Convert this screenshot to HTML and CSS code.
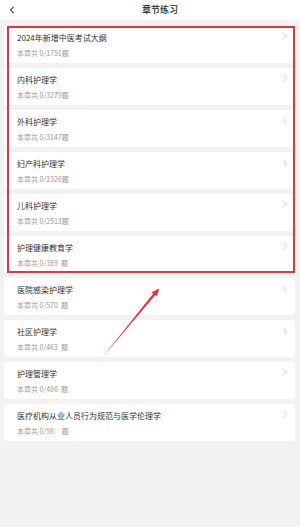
FILE: index.html
```html
<!DOCTYPE html>
<html lang="zh">
<head>
<meta charset="utf-8">
<link rel="stylesheet" href="styles.css">
</head>
<body>
<header class="header">
  <svg class="back" width="6" height="8" viewBox="0 0 6 8"><path d="M4.5 0.8 L1.5 4 L4.5 7.2" fill="none" stroke="#444" stroke-width="1.1"/></svg>
  <div class="title">章节练习</div>
</header>
<main class="list">
  <div class="card"><div class="name">2024年新增中医考试大纲</div><div class="sub">本章共 0/1751题</div><svg class="chev" width="4" height="7" viewBox="0 0 4 7"><path d="M0.5 0.5 L3.3 3.5 L0.5 6.5" fill="none" stroke="#c8c8c8" stroke-width="0.8"/></svg></div>
  <div class="card"><div class="name">内科护理学</div><div class="sub">本章共 0/3279题</div><svg class="chev" width="4" height="7" viewBox="0 0 4 7"><path d="M0.5 0.5 L3.3 3.5 L0.5 6.5" fill="none" stroke="#c8c8c8" stroke-width="0.8"/></svg></div>
  <div class="card"><div class="name">外科护理学</div><div class="sub">本章共 0/3147题</div><svg class="chev" width="4" height="7" viewBox="0 0 4 7"><path d="M0.5 0.5 L3.3 3.5 L0.5 6.5" fill="none" stroke="#c8c8c8" stroke-width="0.8"/></svg></div>
  <div class="card"><div class="name">妇产科护理学</div><div class="sub">本章共 0/2326题</div><svg class="chev" width="4" height="7" viewBox="0 0 4 7"><path d="M0.5 0.5 L3.3 3.5 L0.5 6.5" fill="none" stroke="#c8c8c8" stroke-width="0.8"/></svg></div>
  <div class="card"><div class="name">儿科护理学</div><div class="sub">本章共 0/2513题</div><svg class="chev" width="4" height="7" viewBox="0 0 4 7"><path d="M0.5 0.5 L3.3 3.5 L0.5 6.5" fill="none" stroke="#c8c8c8" stroke-width="0.8"/></svg></div>
  <div class="card"><div class="name">护理健康教育学</div><div class="sub">本章共 0/359&nbsp; 题</div><svg class="chev" width="4" height="7" viewBox="0 0 4 7"><path d="M0.5 0.5 L3.3 3.5 L0.5 6.5" fill="none" stroke="#c8c8c8" stroke-width="0.8"/></svg></div>
  <div class="card"><div class="name">医院感染护理学</div><div class="sub">本章共 0/570&nbsp; 题</div><svg class="chev" width="4" height="7" viewBox="0 0 4 7"><path d="M0.5 0.5 L3.3 3.5 L0.5 6.5" fill="none" stroke="#c8c8c8" stroke-width="0.8"/></svg></div>
  <div class="card"><div class="name">社区护理学</div><div class="sub">本章共 0/463&nbsp; 题</div><svg class="chev" width="4" height="7" viewBox="0 0 4 7"><path d="M0.5 0.5 L3.3 3.5 L0.5 6.5" fill="none" stroke="#c8c8c8" stroke-width="0.8"/></svg></div>
  <div class="card"><div class="name">护理管理学</div><div class="sub">本章共 0/486&nbsp; 题</div><svg class="chev" width="4" height="7" viewBox="0 0 4 7"><path d="M0.5 0.5 L3.3 3.5 L0.5 6.5" fill="none" stroke="#c8c8c8" stroke-width="0.8"/></svg></div>
  <div class="card"><div class="name">医疗机构从业人员行为规范与医学伦理学</div><div class="sub">本章共 0/98&nbsp;&nbsp;&nbsp;&nbsp; 题</div><svg class="chev" width="4" height="7" viewBox="0 0 4 7"><path d="M0.5 0.5 L3.3 3.5 L0.5 6.5" fill="none" stroke="#c8c8c8" stroke-width="0.8"/></svg></div>
</main>
<div class="highlight"></div>
<svg class="arrow" width="300" height="527" viewBox="0 0 300 527">
  <path d="M101.5 358.5 L153.5 293.2 L155.6 294.8 Z" fill="#e8323c"/>
  <path d="M159.5 288.5 L151.4 292.3 L156.8 296.3 Z" fill="#e8323c"/>
</svg>
</body>
</html>
```
FILE: styles.css
```css
html, body {
  margin: 0;
  padding: 0;
}
body {
  width: 300px;
  height: 527px;
  background: #f2f2f2;
  font-family: "Noto Sans CJK SC", "Noto Sans", sans-serif;
  position: relative;
  overflow: hidden;
}
.header {
  height: 20px;
  background: #ffffff;
  display: flex;
  align-items: center;
  position: relative;
}
.back {
  position: absolute;
  left: 9px;
  top: 6px;
}
.title {
  flex: 1;
  text-align: center;
  padding-left: 20px;
  font-size: 9px;
  font-weight: 500;
  color: #222;
  line-height: 20px;
}
.list {
  display: flex;
  flex-direction: column;
  gap: 5px;
  padding: 6px 5px 0 4px;
}
.card {
  position: relative;
  height: 37px;
  box-sizing: border-box;
  background: #ffffff;
  border-radius: 4px;
  padding: 6px 13px 0 13px;
}
.name {
  font-size: 8px;
  line-height: 12px;
  color: #333;
}
.sub {
  margin-top: 4px;
  font-size: 7px;
  line-height: 10px;
  color: #9a9a9a;
  white-space: pre;
}
.chev {
  position: absolute;
  right: 8px;
  top: 7px;
}
.highlight {
  position: absolute;
  left: 7px;
  top: 26px;
  width: 288px;
  height: 247px;
  box-sizing: border-box;
  border: 2px solid #e8323c;
}
.arrow {
  position: absolute;
  left: 0;
  top: 0;
  pointer-events: none;
}
```
